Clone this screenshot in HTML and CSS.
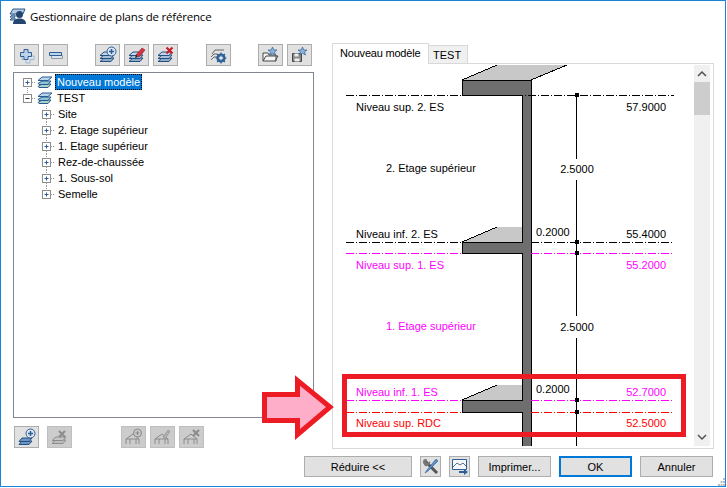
FILE: index.html
```html
<!DOCTYPE html>
<html lang="fr">
<head>
    <meta charset="UTF-8">
    <title>Gestionnaire de plans de référence</title>
    <link rel="stylesheet" href="styles.css">
</head>
<body>
    <svg class="defs" width="0" height="0">
        <defs>
            <symbol id="layers" viewBox="0 0 16 16">
                <path d="M1 12.500 5 10h9l-3 3.500H2z" fill="#a9d3c8" stroke="#2b5a8c"/>
                <path d="M1 9.500 5 7h9l-3 3.500H2z" fill="#8fc4d8" stroke="#2b5a8c"/>
                <path d="M1 6.500 5 3h10l-4 3.500H2z" fill="#b9d6ee" stroke="#2b5a8c"/>
            </symbol>
            <symbol id="stack" viewBox="0 0 25 22">
                <path d="M5 17.500 9 14h10l-3 3.500z" fill="#8fa9c9" stroke="#24507f"/>
                <path d="M5 14.500 9 11h10l-3 3.500z" fill="#a8bfd9" stroke="#24507f"/>
                <path d="M5 11.500 9 8h10l-3 3.500z" fill="#c3d5e8" stroke="#24507f"/>
            </symbol>
            <symbol id="stack-off" viewBox="0 0 25 22">
                <path d="M5 17.500 9 14h10l-3 3.500z" fill="#bdbdbd" stroke="#8c8c8c"/>
                <path d="M5 14.500 9 11h10l-3 3.500z" fill="#c6c6c6" stroke="#8c8c8c"/>
            </symbol>
            <symbol id="roof-off" viewBox="0 0 25 22">
                <path d="M5 18v-5l7-5 6 5v5M5 13h13M9 18v-5M15 18v-5" fill="none" stroke="#8a8a8a"/>
            </symbol>
        </defs>
    </svg>

    <div class="window">
        <header class="titlebar">
            <svg class="title-icon" width="18" height="18" viewBox="0 0 18 18">
                <path d="M1 7 4 2h12l-2 5zM1 10l2-2h3v2zM1 13l2-2h3v2z" fill="#b8cbe0" stroke="#2b5a8c"/>
                <circle cx="10.500" cy="7.500" r="3.500" fill="#24466e"/>
                <path d="M4 17c0-4 3-5.500 6.500-5.500S17 13 17 17z" fill="#24466e"/>
            </svg>
            <span class="title-text">Gestionnaire de plans de référence</span>
        </header>

        <main class="content">
            <section class="left-col">
                <div class="toolbar">
                    <div class="tool-group">
                        <button class="tool"><svg width="25" height="22" viewBox="0 0 25 22"><path d="M12 8.500h4v3.500h4v3.500h-4V19h-4v-3.500H8V12h4z" fill="#dbe5ef" stroke="#9fb6cf"/><path d="M10 5.500h4v3h3.500v4H14v3h-4v-3H6.500v-4H10z" fill="#bcd3ea" stroke="#2d5f95"/></svg></button>
                        <button class="tool"><svg width="25" height="22" viewBox="0 0 25 22"><path d="M8.500 11.500h11v3h-11z" fill="#dbe5ef" stroke="#8f9aa6"/><path d="M6.500 8.500h12v3h-12z" fill="#bcd3ea" stroke="#2d5f95"/></svg></button>
                    </div>
                    <div class="tool-group group-add">
                        <button class="tool"><svg width="25" height="22" viewBox="0 0 25 22"><use href="#stack"/><circle cx="16.500" cy="7.500" r="4.500" fill="#dbe6f2" stroke="#2d5f95"/><path d="M14 7.500h5M16.500 5v5" stroke="#2d5f95" stroke-width="1.500"/></svg></button>
                        <button class="tool"><svg width="25" height="22" viewBox="0 0 25 22"><use href="#stack"/><path d="M12 11l6-7 3 2-6 7z" fill="#d5333f" stroke="#8c1c24" stroke-width=".6"/><path d="M12 11l-1 3 3-1z" fill="#222"/></svg></button>
                        <button class="tool"><svg width="25" height="22" viewBox="0 0 25 22"><use href="#stack"/><path d="M13.500 3.500l6 6M19.500 3.500l-6 6" stroke="#c8202c" stroke-width="2.200"/></svg></button>
                    </div>
                    <div class="tool-group group-gear">
                        <button class="tool"><svg width="25" height="22" viewBox="0 0 25 22"><path d="M6 10l3-4h9M5 13l3-3h3M5 16l3-3h3" fill="none" stroke="#666"/><circle cx="15" cy="14" r="3.500" fill="#fff" stroke="#2d5f95" stroke-width="2.200"/><path d="M15 8.500v11M9.500 14h11M11 10l8 8M19 10l-8 8" stroke="#2d5f95" stroke-width="1.200"/><circle cx="15" cy="14" r="1.800" fill="#dfe8f2"/></svg></button>
                    </div>
                    <div class="tool-group group-star">
                        <button class="tool"><svg width="25" height="22" viewBox="0 0 25 22"><path d="M5 17V9h5l1 2h7v6zM5 17l3-5h12l-3 5" fill="#f4f4f4" stroke="#4a4a4a"/><path d="M14.500 3l1.300 3h3.200l-2.500 2 1 3-3-1.800-3 1.800 1-3-2.500-2h3.200z" fill="#8db4dc" stroke="#2d5f95" stroke-width=".7"/></svg></button>
                        <button class="tool"><svg width="25" height="22" viewBox="0 0 25 22"><path d="M5.500 9.500h9v8h-9z" fill="#8a8a8a" stroke="#444"/><path d="M7.500 9.500h4v3h-4zM7.500 14.500h5v3h-5z" fill="#eee"/><path d="M15.500 3l1.300 3h3.200l-2.500 2 1 3-3-1.800-3 1.800 1-3-2.500-2h3.200z" fill="#8db4dc" stroke="#2d5f95" stroke-width=".7"/></svg></button>
                    </div>
                </div>

                <div class="tree">
                    <div class="tree-row">
                        <svg class="node" width="16" height="16" viewBox="0 0 16 16"><path class="dots" d="M8.500 12v4M13 8.500h3"/><rect class="box" x="4.500" y="4.500" width="8" height="8"/><path class="sign" d="M6.500 8.500h4M8.500 6.500v4"/></svg>
                        <svg class="leaf-icon" width="16" height="16"><use href="#layers"/></svg>
                        <span class="label selected">Nouveau modèle</span>
                    </div>
                    <div class="tree-row">
                        <svg class="node" width="16" height="16" viewBox="0 0 16 16"><path class="dots" d="M8.500 0v4M13 8.500h3"/><rect class="box" x="4.500" y="4.500" width="8" height="8"/><path class="sign dark" d="M6.500 8.500h4"/></svg>
                        <svg class="leaf-icon" width="16" height="16"><use href="#layers"/></svg>
                        <span class="label">TEST</span>
                    </div>
                    <div class="tree-row child">
                        <svg class="node" width="16" height="16" viewBox="0 0 16 16"><path class="dots" d="M8.500 0v4M8.500 13v3M13 8.500h3"/><rect class="box" x="4.500" y="4.500" width="8" height="8"/><path class="sign" d="M6.500 8.500h4M8.500 6.500v4"/></svg>
                        <span class="label">Site</span>
                    </div>
                    <div class="tree-row child">
                        <svg class="node" width="16" height="16" viewBox="0 0 16 16"><path class="dots" d="M8.500 0v4M8.500 13v3M13 8.500h3"/><rect class="box" x="4.500" y="4.500" width="8" height="8"/><path class="sign" d="M6.500 8.500h4M8.500 6.500v4"/></svg>
                        <span class="label">2. Etage supérieur</span>
                    </div>
                    <div class="tree-row child">
                        <svg class="node" width="16" height="16" viewBox="0 0 16 16"><path class="dots" d="M8.500 0v4M8.500 13v3M13 8.500h3"/><rect class="box" x="4.500" y="4.500" width="8" height="8"/><path class="sign" d="M6.500 8.500h4M8.500 6.500v4"/></svg>
                        <span class="label">1. Etage supérieur</span>
                    </div>
                    <div class="tree-row child">
                        <svg class="node" width="16" height="16" viewBox="0 0 16 16"><path class="dots" d="M8.500 0v4M8.500 13v3M13 8.500h3"/><rect class="box" x="4.500" y="4.500" width="8" height="8"/><path class="sign" d="M6.500 8.500h4M8.500 6.500v4"/></svg>
                        <span class="label">Rez-de-chaussée</span>
                    </div>
                    <div class="tree-row child">
                        <svg class="node" width="16" height="16" viewBox="0 0 16 16"><path class="dots" d="M8.500 0v4M8.500 13v3M13 8.500h3"/><rect class="box" x="4.500" y="4.500" width="8" height="8"/><path class="sign" d="M6.500 8.500h4M8.500 6.500v4"/></svg>
                        <span class="label">1. Sous-sol</span>
                    </div>
                    <div class="tree-row child">
                        <svg class="node" width="16" height="16" viewBox="0 0 16 16"><path class="dots" d="M8.500 0v4M13 8.500h3"/><rect class="box" x="4.500" y="4.500" width="8" height="8"/><path class="sign" d="M6.500 8.500h4M8.500 6.500v4"/></svg>
                        <span class="label">Semelle</span>
                    </div>
                </div>

                <div class="toolbar bottom-tools">
                    <div class="tool-group">
                        <button class="tool"><svg width="25" height="22" viewBox="0 0 25 22"><path d="M5 18.500 8 15h10l-3 3.500z" fill="#6f95c4" stroke="#24507f"/><path d="M5 15.500 8 12h10l-3 3.500z" fill="#6f95c4" stroke="#24507f"/><circle cx="16.500" cy="7.500" r="4.500" fill="#dbe6f2" stroke="#2d5f95"/><path d="M14 7.500h5M16.500 5v5" stroke="#2d5f95" stroke-width="1.500"/></svg></button>
                        <button class="tool off group-del"><svg width="25" height="22" viewBox="0 0 25 22"><use href="#stack-off"/><path d="M12 5l6 6M18 5l-6 6" stroke="#8c8c8c" stroke-width="2"/></svg></button>
                    </div>
                    <div class="tool-group group-roof">
                        <button class="tool off"><svg width="25" height="22" viewBox="0 0 25 22"><use href="#roof-off"/><circle cx="16.500" cy="7" r="4" fill="#c8c8c8" stroke="#8a8a8a"/><path d="M14.500 7h4M16.500 5v4" stroke="#8a8a8a"/></svg></button>
                        <button class="tool off"><svg width="25" height="22" viewBox="0 0 25 22"><use href="#roof-off"/><path d="M13 11l5-7 2 1.500-5 7z" fill="#b0b0b0" stroke="#8a8a8a" stroke-width=".6"/></svg></button>
                        <button class="tool off"><svg width="25" height="22" viewBox="0 0 25 22"><use href="#roof-off"/><path d="M14 4l6 6M20 4l-6 6" stroke="#8a8a8a" stroke-width="2"/></svg></button>
                    </div>
                </div>
            </section>

            <section class="right-col">
                <div class="tabs">
                    <span class="tab active">Nouveau modèle</span>
                    <span class="tab">TEST</span>
                </div>
                <div class="tab-panel">
                    <!-- viewBox starts at the panel's inner corner, in window pixels -->
                    <svg class="section-view" width="361" height="381" viewBox="333 65 361 381">
                        <path class="concrete-top" d="M462 80 497 65h70l-36 15zM462 242 497 227h25v15zM462 400 497 385h25v15z"/>
                        <path class="slope" d="M462 80 497 65M531 80l36-15M462 242 497 227M462 400 497 385"/>
                        <path class="concrete" d="M462 80.500h69v365.500h-9V412.500h-60V400.500h60V253.500h-60V242.500h60V95.500h-60z"/>

                        <path class="axis black" d="M346 95.500h328"/>
                        <path class="axis black" d="M346 242.500h116M531 242.500h143"/>
                        <path class="axis pink" d="M346 253.500h116M531 253.500h143"/>
                        <path class="axis pink" d="M346 400.500h116M531 400.500h143"/>
                        <path class="axis red" d="M346 412.500h116M531 412.500h143"/>

                        <path class="dim" d="M576.500 95v64M576.500 180v136M576.500 338v108"/>
                        <path class="tick" d="M575 93h4v4h-4zM575 240h4v4h-4zM575 251h4v4h-4zM575 398h4v4h-4zM575 410h4v4h-4z"/>

                        <text x="356" y="111">Niveau sup. 2. ES</text>
                        <text x="666" y="111" class="end">57.9000</text>
                        <text x="386" y="172">2. Etage supérieur</text>
                        <text x="577" y="173" class="mid">2.5000</text>
                        <text x="356" y="238">Niveau inf. 2. ES</text>
                        <text x="536" y="236">0.2000</text>
                        <text x="666" y="238" class="end">55.4000</text>
                        <text x="356" y="269" class="pink-text">Niveau sup. 1. ES</text>
                        <text x="666" y="269" class="end pink-text">55.2000</text>
                        <text x="386" y="330" class="pink-text">1. Etage supérieur</text>
                        <text x="577" y="331" class="mid">2.5000</text>
                        <text x="356" y="396" class="pink-text">Niveau inf. 1. ES</text>
                        <text x="536" y="393">0.2000</text>
                        <text x="666" y="396" class="end pink-text">52.7000</text>
                        <text x="356" y="427" class="red-text">Niveau sup. RDC</text>
                        <text x="666" y="427" class="end red-text">52.5000</text>
                    </svg>
                    <div class="scrollbar">
                        <svg class="chevron" width="16" height="17" viewBox="0 0 16 17"><path d="M4 11l4-4 4 4" fill="none" stroke="#505050" stroke-width="1.500"/></svg>
                        <div class="thumb"></div>
                        <svg class="chevron" width="16" height="17" viewBox="0 0 16 17"><path d="M4 6l4 4 4-4" fill="none" stroke="#505050" stroke-width="1.500"/></svg>
                    </div>
                </div>
            </section>
        </main>

        <footer class="footer">
            <button class="btn btn-reduce">Réduire &lt;&lt;</button>
            <button class="btn btn-icon"><svg width="21" height="21" viewBox="0 0 21 21"><path d="M4 4l13 13" stroke="#555" stroke-width="3"/><path d="M3 7a4 4 0 0 1 4-4l-1 3 2 1 2-2a4 4 0 0 1-5 5z" fill="#777"/><path d="M16 3l2 2-10 10-3 2 2-3z" fill="#5a8fc4" stroke="#2d5f95" stroke-width=".6"/></svg></button>
            <button class="btn btn-icon"><svg width="21" height="21" viewBox="0 0 21 21"><path d="M3.500 3.500h14v10h-14z" fill="#f5f8fb" stroke="#2d5f95"/><path d="M4 11l4-4 3 2 3-2 3 3" fill="none" stroke="#5a6f88"/><path d="M10 15h5v-2l4 3-4 3v-2h-5z" fill="#2d5f95"/></svg></button>
            <button class="btn btn-print">Imprimer...</button>
            <button class="btn btn-ok">OK</button>
            <button class="btn btn-cancel">Annuler</button>
        </footer>

        <svg class="grip" width="7" height="8" viewBox="0 0 7 8">
            <path d="M5 0h2v2H5zM2.500 3h2v2h-2zM5 3h2v2H5zM0 6h2v2H0zM2.500 6h2v2h-2zM5 6h2v2H5z" fill="#bdbdbd"/>
        </svg>

        <!-- callout added on top of the screenshot -->
        <svg class="callout" width="727" height="488" viewBox="0 0 727 488">
            <path class="callout-arrow" d="M264.500 394.500h33V380.500L330 407 297.500 434.500v-14h-33z"/>
            <rect class="callout-box" x="344.500" y="376.500" width="339" height="58"/>
        </svg>
    </div>
</body>
</html>
```

FILE: styles.css
```css
* {
    box-sizing: border-box;
}
body {
    margin: 0;
    background-color: white;
    font-family: "Liberation Sans", Arial, sans-serif;
    font-size: 11px;
    color: #000;
}
.defs {
    display: block;
    height: 0;
}
.window {
    position: relative;
    width: 726px;
    height: 487px;
    background-color: white;
    border: 1px solid #1883d7;
    overflow: hidden;
}

/* title */
.titlebar {
    display: flex;
    align-items: center;
    height: 31px;
    padding: 0 0 1px 8px;
}
.title-icon {
    margin-right: 3px;
}
.title-text {
    font-family: "Open Sans", sans-serif;
    font-size: 11.5px;
    letter-spacing: -0.2px;
}

/* main area */
.content {
    display: flex;
    height: 392px;
    padding-top: 12px;
}
.left-col {
    width: 331px;
    padding-left: 12px;
}
.toolbar {
    display: flex;
    height: 22px;
    padding-left: 1px;
}
.tool-group {
    display: flex;
    gap: 4px;
}
.group-add {
    margin-left: 27px;
}
.group-gear {
    margin-left: 28px;
}
.group-star {
    margin-left: 27px;
}
.tool {
    display: block;
    width: 25px;
    height: 22px;
    padding: 0;
    margin: 0;
    background-color: #e1e1e1;
    border: 1px solid #adadad;
}
.tool svg {
    display: block;
    margin: -1px;
}
.tool.off {
    background-color: #cccccc;
    border-color: #bfbfbf;
}
.group-del {
    margin-left: 4px;
}
.group-roof {
    margin-left: 49px;
}
.bottom-tools {
    margin-top: 8px;
}

/* tree */
.tree {
    width: 301px;
    height: 346px;
    margin-top: 6px;
    padding: 1px 0 0 5px;
    border: 1px solid #828790;
}
.tree-row {
    display: flex;
    align-items: center;
    height: 16px;
}
.tree-row.child {
    padding-left: 19px;
}
.node {
    flex: none;
}
.leaf-icon {
    flex: none;
    margin-left: 2px;
}
.dots {
    fill: none;
    stroke: #9a9a9a;
    stroke-dasharray: 1 1;
}
.box {
    fill: white;
    stroke: #8c8c8c;
}
.sign {
    fill: none;
    stroke: #2d5f95;
}
.sign.dark {
    stroke: #333;
}
.label {
    padding: 0 2px;
    margin-left: 2px;
    line-height: 16px;
    white-space: nowrap;
}
.selected {
    background-color: #0078d7;
    color: white;
    outline: 1px dotted #000;
    outline-offset: -1px;
}

/* tabs */
.right-col {
    width: 382px;
}
.tabs {
    display: flex;
    align-items: flex-end;
    height: 20px;
    margin-top: -1px;
}
.tab {
    display: block;
    width: 39px;
    height: 18px;
    padding-left: 4px;
    background-color: #f0f0f0;
    border: 1px solid #d9d9d9;
    border-bottom: none;
    border-left: none;
    line-height: 19px;
}
.tab.active {
    position: relative;
    z-index: 1;
    width: 97px;
    height: 21px;
    margin-bottom: -1px;
    padding-left: 7px;
    background-color: white;
    border-left: 1px solid #d9d9d9;
    line-height: 19px;
    letter-spacing: -0.2px;
}
.tab-panel {
    display: flex;
    height: 386px;
    padding: 1px 3px 2px 0;
    border: 1px solid #d9d9d9;
}
.section-view {
    display: block;
    flex: none;
    shape-rendering: crispEdges;
}
.section-view text {
    font-family: "Liberation Sans", Arial, sans-serif;
    font-size: 11px;
}
.section-view .end {
    text-anchor: end;
}
.section-view .mid {
    text-anchor: middle;
}
.section-view .pink-text {
    fill: #ff00ff;
}
.section-view .red-text {
    fill: #ff0000;
}
.concrete {
    fill: #6e6e6e;
    stroke: #000;
}
.concrete-top {
    fill: #c8c8c8;
}
.slope {
    fill: none;
    stroke: #000;
}
.axis {
    fill: none;
    stroke-dasharray: 8 2 1 2;
}
.axis.black {
    stroke: #000;
}
.axis.pink {
    stroke: #ff00ff;
}
.axis.red {
    stroke: #ff0000;
}
.dim {
    fill: none;
    stroke: #000;
}
.tick {
    fill: #000;
}

/* scrollbar */
.scrollbar {
    display: flex;
    flex-direction: column;
    width: 16px;
    background-color: #f0f0f0;
}
.chevron {
    display: block;
    flex: none;
}
.thumb {
    height: 33px;
    background-color: #cdcdcd;
    margin-bottom: auto;
}

/* bottom buttons */
.footer {
    display: flex;
    height: 21px;
    margin-top: 32px;
    padding-left: 303px;
}
.btn {
    height: 21px;
    padding: 0;
    margin: 0 8px 0 0;
    background-color: #e1e1e1;
    border: 1px solid #adadad;
    font-family: "Liberation Sans", Arial, sans-serif;
    font-size: 11px;
    color: #000;
}
.btn-reduce {
    width: 108px;
}
.btn-icon {
    width: 21px;
}
.btn-icon svg {
    display: block;
    margin: -1px;
}
.btn-print,
.btn-ok,
.btn-cancel {
    width: 73px;
}
.btn-ok {
    border: 2px solid #0078d7;
}
.grip {
    position: absolute;
    right: 0;
    bottom: 0;
}

/* callout */
.callout {
    position: absolute;
    top: -1px;
    left: -1px;
    pointer-events: none;
}
.callout-arrow {
    fill: #ffaec9;
    stroke: #ed1c24;
    stroke-width: 5;
}
.callout-box {
    fill: none;
    stroke: #ed1c24;
    stroke-width: 5;
}
```
